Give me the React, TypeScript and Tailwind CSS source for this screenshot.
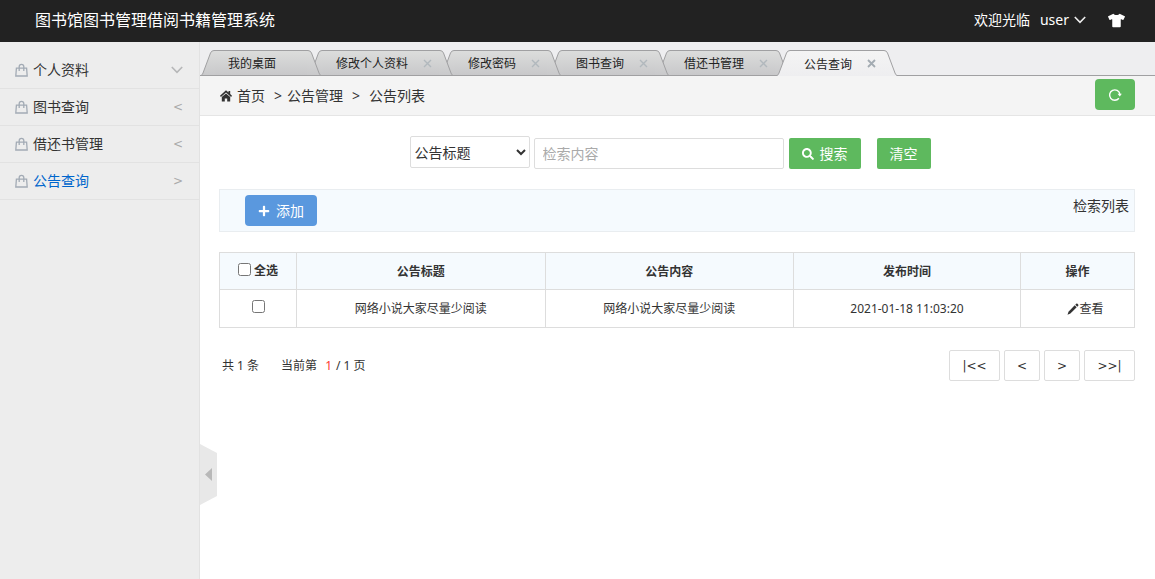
import { FaSearch, FaPlus, FaTshirt } from 'react-icons/fa';

const menus = [
  { name: '个人资料', mark: 'down' },
  { name: '图书查询', mark: '<' },
  { name: '借还书管理', mark: '<' },
  { name: '公告查询', mark: '>', active: true },
];

const tabs = [
  { name: '我的桌面', layer: 'z-[6]' },
  { name: '修改个人资料', layer: 'z-[5]', closable: true },
  { name: '修改密码', layer: 'z-[4]', closable: true },
  { name: '图书查询', layer: 'z-[3]', closable: true },
  { name: '借还书管理', layer: 'z-[2]', closable: true },
  { name: '公告查询', layer: 'z-10', closable: true, active: true },
];

const notices = [
  { title: '网络小说大家尽量少阅读', content: '网络小说大家尽量少阅读', time: '2021-01-18 11:03:20' },
];

function BagIcon() {
  return (
    <svg width="13" height="14" viewBox="0 0 13 14" fill="none" stroke="#a3abb5" strokeWidth="1.3" className="shrink-0">
      <path d="M1.4 5.2h10.2l0.6 7.8H0.8z" />
      <path d="M4.2 8V3.6a2.3 2.3 0 0 1 4.6 0V8" />
    </svg>
  );
}

function HomeIcon() {
  return (
    <svg width="12" height="12" viewBox="0 0 12 12" fill="#333">
      <path d="M6 0.3L0 5.7l0.9 1.2L6 2.4l5.1 4.5 0.9-1.2-1.8-1.6V1H8.5v1.5z" />
      <path d="M6 3.4L1.8 7.1V11.5h3V8.4h2.4v3.1h3V7.1z" />
    </svg>
  );
}

function PencilIcon() {
  return (
    <svg width="12" height="12" viewBox="0 0 12 12" fill="#333">
      <path d="M0.5 11.7l1-3 6.2-6.4 2 2-6.3 6.3z" />
      <path d="M8.3 1.7l0.9-0.9a0.9 0.9 0 0 1 1.3 0l0.7 0.7a0.9 0.9 0 0 1 0 1.3l-0.9 0.9z" />
    </svg>
  );
}

function RefreshIcon() {
  return (
    <svg width="14" height="14" viewBox="0 0 14 14" fill="none" stroke="#fff" strokeWidth="1.4">
      <path d="M10.9 10.3A5.2 5.2 0 1 1 11.9 6" />
      <path d="M9.6 5.8h4.2l-2 2.6z" fill="#fff" stroke="none" />
    </svg>
  );
}

function Chevron({ color }: { color: string }) {
  return (
    <svg width="12" height="8" viewBox="0 0 12 8" fill="none" stroke={color} strokeWidth="1.6">
      <path d="M0.8 1L6 6.3 11.2 1" />
    </svg>
  );
}

function TabEdge({ active, right }: { active?: boolean; right?: boolean }) {
  const id = `edge-${active ? 'on' : 'off'}-${right ? 'r' : 'l'}`;
  const slope = right
    ? 'M0 0.5H1Q3.5 0.5 4.5 3L12 23Q12.6 25 14 25.5'
    : 'M14 0.5H13Q10.5 0.5 9.5 3L2 23Q1.4 25 0 25.5';
  return (
    <svg width="14" height="26" viewBox="0 0 14 26" className="shrink-0">
      <defs>
        <linearGradient id={id} x1="0" y1="0" x2="0" y2="1">
          <stop offset="0" stopColor={active ? '#f4f4f4' : '#dcdddc'} />
          <stop offset="1" stopColor={active ? '#eeeef0' : '#c8c8ca'} />
        </linearGradient>
      </defs>
      <path d={slope + (right ? 'V26H0Z' : 'V26H14Z')} fill={`url(#${id})`} />
      <path d={slope} fill="none" stroke="#a0a0a2" />
      {!active && <path d="M0 25.5H14" stroke="#a0a0a2" />}
    </svg>
  );
}

function Tab({ name, layer, active, closable }: { name: string; layer: string; active?: boolean; closable?: boolean }) {
  return (
    <li className={`-mr-3 flex h-[26px] ${layer}`}>
      <TabEdge active={active} />
      <div
        className={`flex items-center border-t border-[#a0a0a2] bg-linear-to-b pl-[13px] ${
          active ? 'from-[#f4f4f4] to-[#eeeef0]' : 'border-b from-[#dcdddc] to-[#c8c8ca]'
        }`}
      >
        <a href="#" className="pt-0.5 text-xs whitespace-nowrap text-[#222]">{name}</a>
        {closable ? (
          <button type="button" aria-label={`关闭${name}`} className="flex w-[31px] justify-center pl-2">
            <svg width="9" height="9" viewBox="0 0 9 9" stroke={active ? '#a3abb2' : '#b1b8bd'} strokeWidth={active ? 1.8 : 1.4}>
              <path d="M1 1l7 7M8 1l-7 7" />
            </svg>
          </button>
        ) : (
          <span className="w-[31px]" />
        )}
      </div>
      <TabEdge active={active} right />
    </li>
  );
}

const pageButton = 'h-[31px] rounded-xs border border-[#ddd] bg-white font-["DejaVu_Sans",sans-serif] text-xs text-[#333]';

export default function App() {
  return (
    <div className='flex min-h-screen flex-col bg-white font-["Noto_Sans","Noto_Sans_CJK_SC",sans-serif] text-sm text-[#333]'>
      <header className="flex h-[42px] items-center justify-between bg-[#222] pr-[30px] pb-0.5 pl-[35px] text-white">
        <h1 className="text-base">图书馆图书管理借阅书籍管理系统</h1>
        <div className="flex items-center">
          <span>欢迎光临</span>
          <button type="button" className="ml-[10px] flex items-center gap-[5px]">
            user
            <Chevron color="#eee" />
          </button>
          <button type="button" aria-label="换肤" className="ml-[22px]">
            <FaTshirt size={17} />
          </button>
        </div>
      </header>

      <div className="flex flex-1">
        <aside className="w-[200px] shrink-0 border-r border-[#e2e2e2] bg-[#ededed] pt-[10px]">
          <nav>
            {menus.map((menu) => (
              <a
                key={menu.name}
                href="#"
                className="flex h-[37px] items-center border-b border-[#e2e2e2] pr-4 pl-[15px]"
              >
                <BagIcon />
                <span className={`ml-[5px] flex-1 ${menu.active ? 'text-[#0066cc]' : ''}`}>{menu.name}</span>
                {menu.mark === 'down' ? (
                  <Chevron color="#b6b7b8" />
                ) : (
                  <span className='font-["DejaVu_Sans",sans-serif] text-xs text-[#aaa]'>{menu.mark}</span>
                )}
              </a>
            ))}
          </nav>
        </aside>

        <main className="relative min-w-0 flex-1">
          <ul className="flex h-[34px] items-end bg-[#eeeef0] pl-px shadow-[inset_0_-1px_0_#a0a0a2]">
            {tabs.map((tab) => (
              <Tab key={tab.name} {...tab} />
            ))}
          </ul>

          <nav className="flex h-10 items-center border-b border-[#e5e5e5] bg-[#f4f4f4] pr-5 pl-5">
            <HomeIcon />
            <a href="#" className="ml-[5px]">首页</a>
            <span className="mr-[5px] ml-[9px]">&gt;</span>
            <span>公告管理</span>
            <span className="mx-[9px]">&gt;</span>
            <span>公告列表</span>
            <button
              type="button"
              aria-label="刷新"
              className="mt-[3px] ml-auto flex h-[31px] w-10 items-center justify-center self-start rounded bg-[#5eb95e]"
            >
              <RefreshIcon />
            </button>
          </nav>

          {/* handle that folds the side menu */}
          <button type="button" aria-label="收起菜单" className="absolute top-[402px] left-0">
            <svg width="17" height="61" viewBox="0 0 17 61">
              <path d="M0 0l17 9v43L0 61z" fill="#e8e8e8" />
              <path d="M12 24v13l-7-6.5z" fill="#b8b8b8" />
            </svg>
          </button>

          <div className="pt-5 pr-5 pl-[19px]">
            <form className="flex items-start justify-center pr-[14px]">
              <select
                aria-label="检索字段"
                className="mr-1 h-8 w-[120px] rounded-xs border border-[#ddd] bg-white"
              >
                <option>公告标题</option>
              </select>
              <input
                type="text"
                aria-label="检索内容"
                placeholder="检索内容"
                className="mt-[2px] h-[31px] w-[250px] rounded-xs border border-[#ddd] px-2 placeholder:text-[#aaa]"
              />
              <button
                type="submit"
                className="mt-[2px] ml-[5px] flex h-[31px] w-[72px] items-center justify-center gap-[6px] rounded-xs bg-[#5eb95e] text-white"
              >
                <FaSearch size={12} />
                搜索
              </button>
              <button type="reset" className="mt-[2px] ml-4 h-[31px] w-[54px] rounded-xs bg-[#5eb95e] text-white">
                清空
              </button>
            </form>

            <div className="mt-5 flex items-start justify-between border border-[#e9edf0] bg-[#f5fafe] py-[5px] pr-[5px] pl-[25px]">
              <button
                type="button"
                className="flex h-[31px] w-[72px] items-center justify-center gap-[6px] rounded bg-[#5a98de] text-white"
              >
                <FaPlus size={12} />
                添加
              </button>
              <span className="leading-[22px]">检索列表</span>
            </div>

            <table className="mt-5 w-full table-fixed border-collapse text-center text-xs">
              <thead>
                <tr className="h-[37px] bg-[#f5fafe]">
                  <th className="w-[77px] border border-[#ddd]">
                    <label className="flex items-start justify-center gap-[3px]">
                      <input type="checkbox" className="size-[13px]" />
                      全选
                    </label>
                  </th>
                  <th className="border border-[#ddd] pt-0.5">公告标题</th>
                  <th className="border border-[#ddd] pt-0.5">公告内容</th>
                  <th className="w-[227px] border border-[#ddd] pt-0.5">发布时间</th>
                  <th className="w-[114px] border border-[#ddd] pt-0.5">操作</th>
                </tr>
              </thead>
              <tbody>
                {notices.map((notice, index) => (
                  <tr key={index} className="h-[38px]">
                    <td className="border border-[#ddd]">
                      <input type="checkbox" aria-label={notice.title} className="size-[13px]" />
                    </td>
                    <td className="border border-[#ddd]">{notice.title}</td>
                    <td className="border border-[#ddd]">{notice.content}</td>
                    <td className="border border-[#ddd]">{notice.time}</td>
                    <td className="border border-[#ddd]">
                      <a href="#" className="flex items-center justify-center pl-4">
                        <PencilIcon />
                        查看
                      </a>
                    </td>
                  </tr>
                ))}
              </tbody>
            </table>

            <div className="mt-[22px] flex items-center justify-between pl-[3px]">
              <p className="flex text-xs">
                <span>共 1 条</span>
                <span className="ml-[22px]">当前第</span>
                <span className="ml-2 text-[#ff3b30]">1</span>
                <span className="ml-1">/ 1 页</span>
              </p>
              <div className="flex gap-1">
                <button type="button" aria-label="首页" className={`w-[51px] ${pageButton}`}>|&lt;&lt;</button>
                <button type="button" aria-label="上一页" className={`w-9 ${pageButton}`}>&lt;</button>
                <button type="button" aria-label="下一页" className={`w-9 ${pageButton}`}>&gt;</button>
                <button type="button" aria-label="末页" className={`w-[51px] ${pageButton}`}>&gt;&gt;|</button>
              </div>
            </div>
          </div>
        </main>
      </div>
    </div>
  );
}
